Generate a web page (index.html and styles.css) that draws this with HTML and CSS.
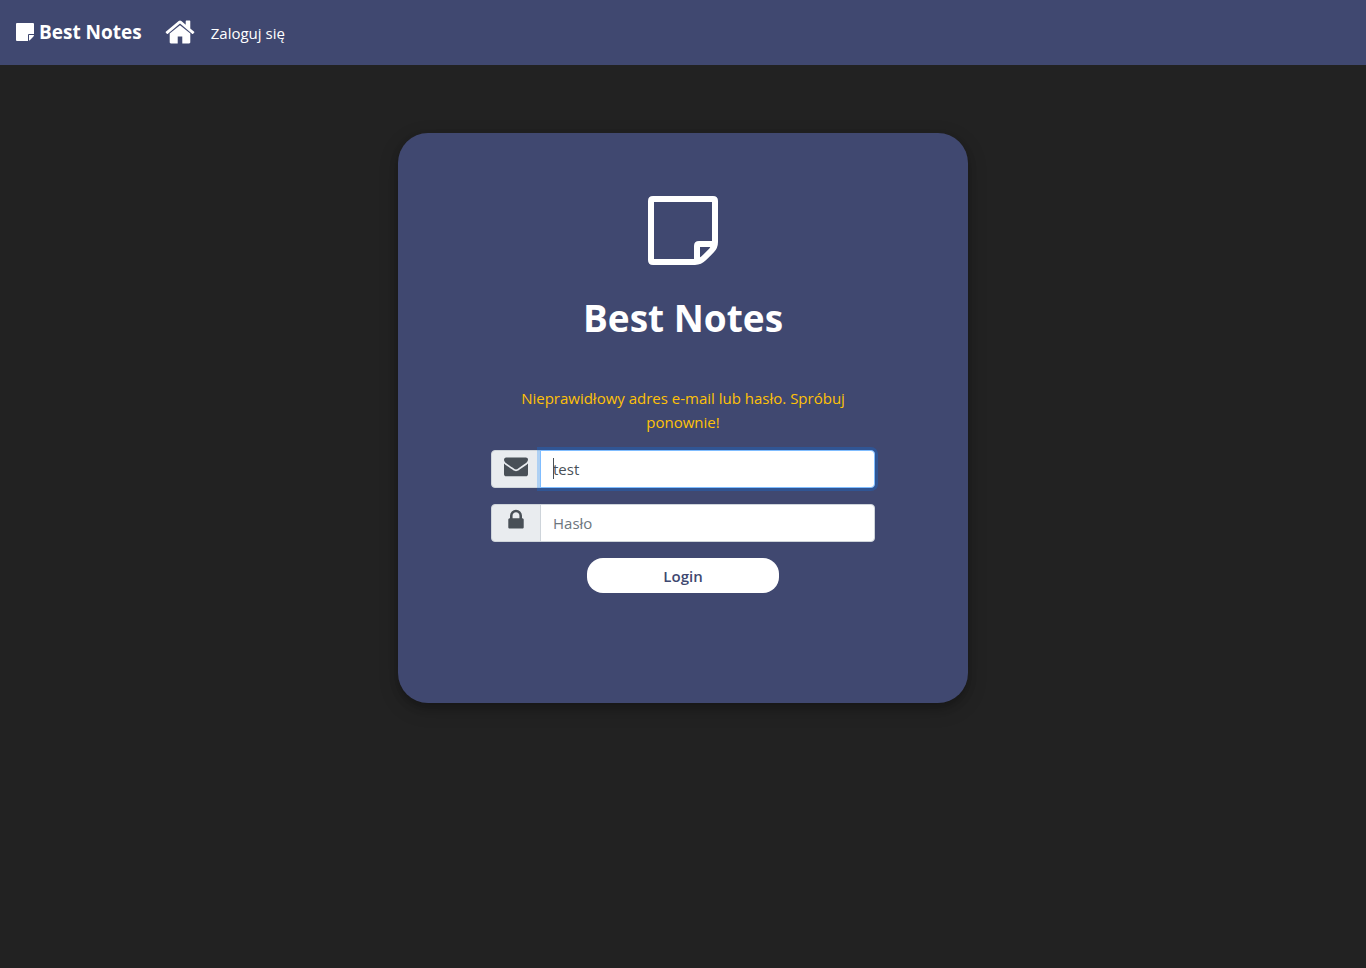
FILE: index.html
```html
<!DOCTYPE html>
<html lang="pl">
<head>
<meta charset="utf-8">
<meta name="viewport" content="width=device-width, initial-scale=1">
<title>Best Notes</title>
<link rel="stylesheet" href="styles.css">
</head>
<body>
<nav class="navbar">
  <a class="brand" href="#">
    <svg class="brand-icon" viewBox="0 0 18 18" aria-hidden="true"><path d="M1 0h16a1 1 0 0 1 1 1v10h-5a1 1 0 0 0-1 1v6H1a1 1 0 0 1-1-1V1a1 1 0 0 1 1-1zM13 12h5q0 1-1 2l-3 3-1 .8z"/></svg>
    <span>Best Notes</span>
  </a>
  <a class="home-link" href="#" aria-label="Home">
    <svg class="home-icon" viewBox="0 0 1792 1792" aria-hidden="true"><path d="M1472 992v480q0 26-19 45t-45 19h-384v-384h-256v384h-384q-26 0-45-19t-19-45v-480q0-1 .5-3t.5-3l575-474 575 474q1 2 1 6zm223-69l-62 74q-8 9-21 11h-3q-13 0-21-7l-692-577-692 577q-12 8-24 7-13-2-21-11l-62-74q-8-10-7-23.5t11-21.5l719-599q32-26 76-26t76 26l244 204v-195q0-14 9-23t23-9h192q14 0 23 9t9 23v408l219 182q10 8 11 21.5t-7 23.5z"/></svg>
  </a>
  <a class="nav-link" href="#">Zaloguj się</a>
</nav>
<main class="page">
  <section class="card">
    <svg class="card-logo" viewBox="0 0 70 70" aria-hidden="true"><path d="M5 3H65q2 0 2 2V46q0 5-3.500 8.500L56 62q-4 4-9 4H5q-2 0-2-2V5q0-2 2-2zM67 48H51q-2 0-2 2V66"/></svg>
    <h1 class="card-title">Best Notes</h1>
    <form class="login-form">
      <p class="error">Nieprawidłowy adres e-mail lub hasło. Spróbuj ponownie!</p>
      <div class="input-group">
        <label class="addon" for="email" aria-label="E-mail">
          <svg class="addon-icon" viewBox="0 0 1792 1792" aria-hidden="true"><path d="M1792 710v794q0 66-47 113t-113 47h-1472q-66 0-113-47t-47-113v-794q44 49 101 87 362 246 497 345 57 42 92.500 65.500t94.500 48 110 24.500h2q51 0 110-24.500t94.500-48 92.500-65.500q170-123 498-345 57-39 100-87zm0-294q0 79-49 151t-122 123q-376 261-468 325-10 7-42.500 31t-54 38.500-52 32.500-57.500 27-50 9h-2q-23 0-50-9t-57.500-27-52-32.500-54-38.500-42.500-31q-91-64-262-182.500t-205-142.500q-62-42-117-115.500t-55-136.500q0-78 41.500-130t118.500-52h1472q65 0 112.500 47t47.500 113z"/></svg>
        </label>
        <div class="field field-active">
          <input class="input" id="email" type="text" value="test">
        </div>
      </div>
      <div class="input-group">
        <label class="addon" for="password" aria-label="Hasło">
          <svg class="addon-icon" viewBox="0 0 1792 1792" aria-hidden="true"><path d="M640 768h512v-192q0-106-75-181t-181-75-181 75-75 181v192zm832 96v576q0 40-28 68t-68 28h-960q-40 0-68-28t-28-68v-576q0-40 28-68t68-28h32v-192q0-184 132-316t316-132 316 132 132 316v192h32q40 0 68 28t28 68z"/></svg>
        </label>
        <div class="field">
          <input class="input" id="password" type="password" placeholder="Hasło">
        </div>
      </div>
      <button class="login-button" type="submit">Login</button>
    </form>
  </section>
</main>
</body>
</html>
```
FILE: styles.css
```css
* {
  box-sizing: border-box;
}

body {
  margin: 0;
  background: #222;
  color: #fff;
  font-family: "Open Sans", "Noto Sans", sans-serif;
  font-size: 15px;
  line-height: 24px;
}

a {
  color: #fff;
  text-decoration: none;
}

.navbar {
  display: flex;
  align-items: center;
  padding: 6px 16px 8px;
  min-height: 65px;
  background: #404870;
}

.brand {
  display: flex;
  align-items: center;
  gap: 5px;
  margin-right: 22px;
  font-size: 19px;
  font-weight: 700;
}

.brand-icon {
  width: 18px;
  height: 18px;
  fill: #fff;
}

.home-icon {
  display: block;
  width: 32px;
  height: 32px;
  fill: #fff;
}

.nav-link {
  padding: 2px 0 0 15px;
}

.page {
  padding: 68px 16px;
}

.card {
  display: flex;
  flex-direction: column;
  align-items: center;
  max-width: 570px;
  min-height: 570px;
  margin: 0 auto;
  padding: 63px 16px 32px;
  border-radius: 30px;
  background: #404870;
  box-shadow: 0 4px 8px 0 rgba(0, 0, 0, 0.2), 0 6px 20px 0 rgba(0, 0, 0, 0.19);
}

.card-logo {
  width: 70px;
  height: 70px;
  fill: none;
  stroke: #fff;
  stroke-width: 6px;
}

.card-title {
  margin: 28px 0 44px;
  font-size: 37px;
  font-weight: 700;
  line-height: 48px;
}

.login-form {
  display: flex;
  flex-direction: column;
  gap: 16px;
  width: 100%;
  max-width: 384px;
}

.error {
  margin: 0;
  padding: 0 24px;
  color: #ffc107;
  text-align: center;
}

.input-group {
  display: flex;
  height: 38px;
}

.addon {
  padding: 3px 12px 0;
  border: 1px solid #ced4da;
  border-radius: 4px 0 0 4px;
  background: #e9ecef;
}

.addon-icon {
  display: block;
  width: 24px;
  height: 24px;
  fill: #495057;
}

.field {
  position: relative;
  flex: 1;
  margin-left: -1px;
}

.input {
  display: block;
  width: 100%;
  height: 100%;
  padding: 6px 12px;
  border: 1px solid #ced4da;
  border-radius: 0 4px 4px 0;
  outline: none;
  background: #fff;
  color: #495057;
  font: inherit;
}

.input::placeholder {
  color: #6c757d;
  opacity: 1;
}

.field-active .input,
.input:focus {
  border-color: #80bdff;
  box-shadow: 0 0 0 3px rgba(0, 123, 255, 0.25);
}

/* Text caret of the active field */
.field-active::before {
  content: "";
  position: absolute;
  top: 8px;
  left: 13px;
  width: 1px;
  height: 21px;
  background: #495057;
}

.login-button {
  align-self: center;
  width: 50%;
  height: 35px;
  padding: 0;
  border: 0;
  border-radius: 16px;
  background: #fff;
  color: #404870;
  font: inherit;
  font-weight: 600;
}
```
